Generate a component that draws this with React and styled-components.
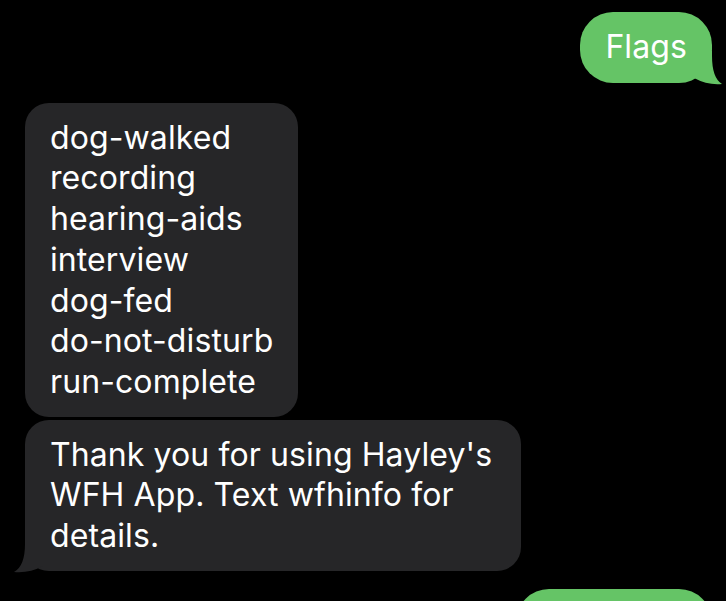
import React from "react";
import styled, { createGlobalStyle } from "styled-components";

const Global = createGlobalStyle`
  html, body {
    margin: 0;
    padding: 0;
    background: #000;
    height: 100%;
    overflow: hidden;
  }
  body {
    font-family: Inter, "Noto Sans", "Liberation Sans", sans-serif;
  }
`;

const Thread = styled.div`
  display: flex;
  flex-direction: column;
  padding: 12px 14px 0 25px;
  background: #000;
  min-height: 601px;
  box-sizing: border-box;
`;

const Row = styled.div`
  display: flex;
  justify-content: ${(p) => (p.$out ? "flex-end" : "flex-start")};
  margin-top: ${(p) => p.$gap || 0}px;
`;

const Bubble = styled.div`
  position: relative;
  box-sizing: border-box;
  width: ${(p) => (p.$w ? `${p.$w}px` : "auto")};
  min-height: ${(p) => (p.$h ? `${p.$h}px` : "0")};
  padding: ${(p) => (p.$out ? "15px 25px" : "15px 25px 14px 25px")};
  border-radius: ${(p) => (p.$out ? 33 : 24)}px;
  background: ${(p) => (p.$out ? "#65c466" : "#262628")};
  color: #fff;
  font-size: 32px;
  line-height: 40.7px;
  letter-spacing: 0.1px;
  white-space: pre-line;
`;

const Tail = styled.svg`
  position: absolute;
  bottom: -2px;
  width: 34px;
  height: 34px;
  ${(p) => (p.$out ? "right: -12px;" : "left: -12px;")}
`;

const OutTail = () => (
  <Tail $out viewBox="0 0 34 34">
    <path d="M20 0 L22 0 L22 5 Q22 27 32 33 Q18 34.5 4 27 L4 0 Z" fill="#65c466" />
  </Tail>
);

const InTail = () => (
  <Tail viewBox="0 0 34 34">
    <path d="M14 0 L12 0 L12 5 Q12 27 1 33 Q16 34.5 30 27 L30 0 Z" fill="#262628" />
  </Tail>
);

export default function App() {
  return (
    <>
      <Global />
      <Thread>
        <Row $out>
          <Bubble $out>
            Flags
            <OutTail />
          </Bubble>
        </Row>
        <Row $gap={20}>
          <Bubble>
            {"dog-walked\nrecording\nhearing-aids\ninterview\ndog-fed\ndo-not-disturb\nrun-complete"}
          </Bubble>
        </Row>
        <Row $gap={3}>
          <Bubble $w={496}>
            Thank you for using Hayley's WFH App. Text wfhinfo for details.
            <InTail />
          </Bubble>
        </Row>
        <Row $out $gap={18}>
          <Bubble $out $w={196} $h={70} />
        </Row>
      </Thread>
    </>
  );
}
